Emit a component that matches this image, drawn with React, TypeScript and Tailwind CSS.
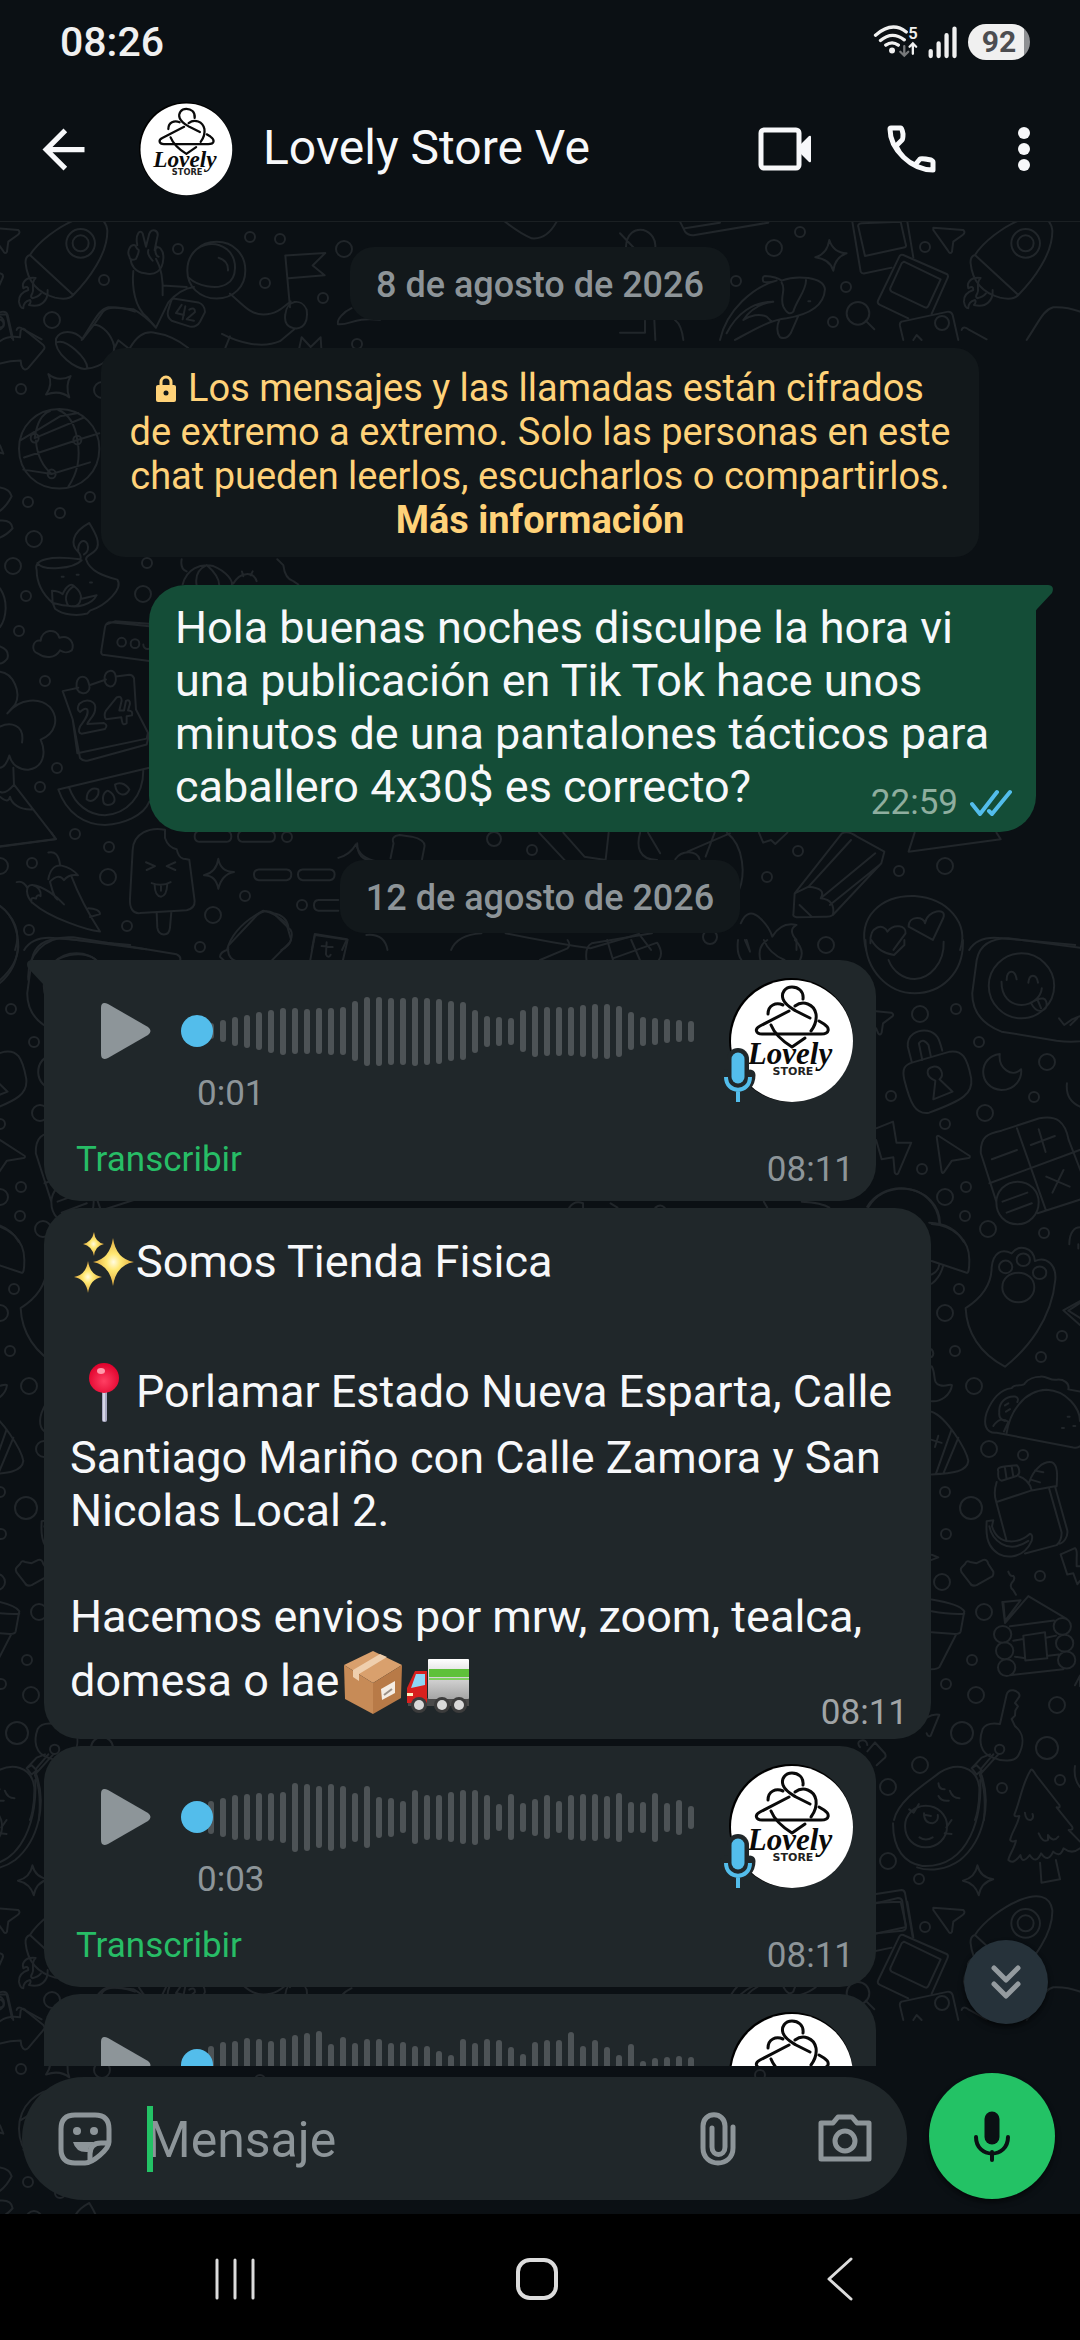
import React from "react";

const SANS = "Roboto, 'Noto Sans', sans-serif";

/* ---------- Wallpaper ---------- */

const DOTS: [number, number, number][] = [
  [104, 280, 5], [52, 320, 8], [178, 249, 5], [250, 237, 5], [280, 239, 5], [344, 249, 8], [265, 283, 5],
  [323, 298, 5], [21, 389, 5], [28, 502, 5], [60, 513, 5], [90, 497, 5], [34, 539, 8], [13, 566, 8],
  [147, 563, 5], [143, 594, 8], [26, 596, 5], [19, 631, 5], [45, 681, 5], [57, 768, 5], [40, 787, 5],
  [75, 834, 5], [109, 847, 5], [32, 863, 5], [108, 877, 8], [245, 896, 5], [213, 915, 8], [302, 905, 5],
  [127, 926, 5], [29, 930, 5], [200, 947, 5], [287, 837, 5], [357, 344, 5], [102, 390, 8], [798, 851, 5],
  [899, 871, 5], [945, 866, 8], [767, 877, 5], [826, 945, 8], [494, 839, 7], [532, 850, 5], [710, 937, 7],
  [920, 1014, 8], [956, 1009, 5], [979, 1042, 5], [1047, 1062, 8], [891, 1096, 5], [985, 1113, 8],
  [1034, 1097, 5], [945, 1124, 5], [922, 1169, 5], [945, 1197, 8], [966, 1187, 5], [965, 1216, 5],
  [988, 1229, 8], [1044, 1233, 5], [959, 1289, 5], [945, 1313, 8], [955, 1351, 5], [1062, 1336, 5],
  [1041, 1357, 5], [974, 1386, 8], [989, 1449, 8], [1023, 1455, 5], [945, 1492, 5], [971, 1508, 11],
  [946, 1534, 5], [942, 1582, 8], [1040, 1576, 5], [984, 1612, 8], [972, 1660, 5], [946, 1684, 5],
  [976, 1695, 8], [1057, 1705, 8], [962, 1733, 11], [1047, 1748, 11], [920, 1765, 8], [888, 1787, 8],
  [1002, 1788, 5], [1060, 1780, 5], [919, 1879, 5], [774, 248, 8], [800, 232, 5], [925, 247, 5],
  [846, 287, 5], [736, 281, 5], [833, 322, 5], [942, 323, 7], [888, 1861, 8],
  [260, 400, 5], [380, 420, 8], [520, 405, 5], [640, 410, 8], [760, 395, 5], [280, 545, 6], [560, 545, 7], [800, 548, 5],
];

const SCENE_TOP = [
  // astronaut, peace hand, suit badge, flag
  "M400 105C395 140 405 180 440 200L468 222L505 170C530 150 560 140 582 138M468 80C485 100 490 125 488 155M488 135L560 138",
  "M388 75C380 65 390 50 405 52L412 60C420 60 415 70 408 80C395 85 388 80 388 75M412 52C405 30 420 18 428 28L438 55L448 28C455 15 478 22 472 35L464 62M464 62C475 48 492 62 490 80C488 105 465 115 435 110C405 108 392 92 392 80M445 62C440 72 452 78 458 84M470 55C462 62 468 75 476 76",
  "M562 104C562 70 600 45 650 45C700 45 736 70 736 104C736 138 700 162 650 162C600 162 562 138 562 104ZM568 82C585 50 640 40 680 60C715 80 712 120 680 132C650 145 590 135 568 120M656 78C675 82 685 92 684 104",
  "M520 162L595 170Q615 175 615 190L600 210Q590 222 570 220L515 208Q500 200 504 188L512 170Q516 162 520 162ZM545 175L528 192L552 196M556 178L548 205M568 185Q585 178 585 190L560 205L582 208",
  "M690 152C730 175 750 195 790 195C830 195 850 180 872 168M666 235C720 255 790 265 840 250L882 226M870 180L856 73L976 68L938 94L974 114L866 120M856 195C860 165 905 160 920 185C925 210 912 222 890 224C862 222 852 212 856 195Z",
  "M282 216L310 188Q325 180 345 181L400 184Q440 200 468 222M248 246L282 216M248 246C220 225 180 228 168 245C160 275 230 310 258 307C300 305 360 280 338 250C325 228 300 216 282 216M172 252C200 245 260 285 262 305M345 262L355 248L388 266C410 240 430 230 460 232C500 236 540 250 565 264M676 264L690 240",
  "M898 264L905 242L932 262L962 242L964 264M1055 182C1030 190 1010 205 1014 215C1050 218 1060 200 1140 206",
  // arrow, star
  "M0 250C20 240 40 240 60 242L62 228Q70 220 80 230L130 258Q138 264 128 270L85 305Q72 314 64 300L62 290C40 290 20 292 0 296M0 195L20 195L36 244M0 205Q15 208 10 220L0 222",
  "M145 318Q175 335 212 322Q195 342 208 366Q180 350 138 360Q160 340 145 318Z",
  // globe
  "M57 472C57 425 110 390 178 390C245 390 298 425 298 472C298 520 245 554 178 554C110 554 57 520 57 472ZM60 455L180 405L235 398M104 450L250 408M108 455C110 485 130 510 155 524L270 500M155 524L70 515M72 490L232 454L298 440M232 454C225 420 205 400 175 392M104 450C110 420 125 400 150 394M232 454C242 490 235 520 205 550M92 450a12 9 0 1 0 24 0a12 9 0 1 0-24 0M220 454a12 9 0 1 0 24 0a12 9 0 1 0-24 0M143 524a12 9 0 1 0 24 0a12 9 0 1 0-24 0",
  // lamp
  "M110 722C100 700 150 692 240 700C245 698 240 688 235 685C210 670 215 645 268 625C280 640 305 665 288 680C275 692 258 690 258 700C270 725 310 735 352 742C370 760 320 795 270 806L262 812C230 818 190 815 165 802L158 790C125 770 110 745 110 722ZM112 708C130 725 220 720 245 702M235 685C232 665 250 655 262 668C268 680 262 686 252 690M158 790L156 765Q175 765 188 772C200 752 215 750 222 755C240 765 245 775 242 782L290 774C275 795 230 800 205 796C180 795 165 790 158 790M205 796C190 780 200 765 222 755M242 782C240 792 230 798 218 797M185 736h6M230 732h6M270 748h6",
  // cloud, radio
  "M115 895C90 890 98 865 122 868C125 845 170 840 178 862C210 855 225 875 215 888C200 895 190 892 180 888C165 905 135 905 115 895Z",
  "M448 910L308 897Q302 895 304 888L315 840Q318 830 332 830L448 838M320 834L345 828L448 833M352 871a13 9 0 1 0 26 0a13 9 0 1 0-26 0M392 874a13 9 0 1 0 26 0a13 9 0 1 0-26 0M430 876a13 9 0 1 0 26 0",
  // calendar
  "M235 965L188 972L218 1030L232 1100L440 1070L444 1058L408 1010L402 945Q398 938 388 938L348 942M268 960L318 948M218 1030L240 1110Q250 1118 265 1115L440 1082L448 1060M230 955C235 938 260 938 266 955C275 972 258 978 246 976C232 974 228 965 230 955ZM314 942C318 928 340 926 346 938C352 955 340 964 328 962C316 960 312 950 314 942Z",
  "M240 1015Q228 1010 238 998C260 985 292 992 285 1012C282 1025 265 1032 262 1040L312 1038Q325 1042 315 1050L245 1060Q232 1058 240 1045C250 1035 268 1022 262 1010Q255 1005 240 1015ZM350 985Q365 980 365 992L358 1012L372 1012L378 992Q390 988 390 998L384 1012Q400 1012 396 1022L380 1024L380 1038Q368 1044 366 1034L364 1026L318 1030Q310 1022 318 1012L350 985Z",
  // flower and basket
  "M0 932C40 935 65 975 45 1000L22 1018C60 985 120 985 150 1005C180 1030 165 1060 122 1072C140 1100 130 1130 85 1134C60 1135 35 1125 28 1105M0 1045C30 1035 75 1040 66 1078M28 1105C22 1120 10 1130 0 1130M40 1130L42 1165L168 1277L0 1292M42 1165C30 1175 15 1185 0 1180M0 1190Q25 1205 30 1190C35 1205 60 1218 100 1216",
  // watermelon
  "M175 1175L448 1130M175 1175C200 1225 255 1248 315 1248C370 1246 430 1230 448 1200M208 1172C225 1205 265 1228 315 1228C380 1225 430 1190 430 1135M260 1195C260 1175 280 1170 295 1175C300 1190 275 1205 260 1195ZM310 1200C305 1185 320 1175 325 1178C345 1185 350 1200 335 1205C325 1208 312 1208 310 1200ZM345 1165C355 1160 375 1160 388 1175C378 1190 350 1190 345 1165Z",
  // chillies
  "M145 1305Q175 1300 180 1330M145 1360C150 1340 165 1330 185 1332C205 1335 220 1340 234 1352C215 1350 200 1355 192 1362C180 1350 165 1355 150 1365C158 1385 160 1395 172 1402M215 1355C240 1400 265 1430 300 1468C260 1465 150 1440 100 1410C75 1395 75 1370 98 1372C130 1375 170 1395 192 1412M50 1366Q70 1362 82 1378M98 1372C115 1375 125 1385 122 1395Q110 1390 108 1400Q90 1395 95 1408M265 1420C285 1420 300 1425 300 1432L270 1438",
  // ice lolly
  "M495 1258C450 1252 400 1265 398 1300L390 1400C388 1420 400 1432 420 1430L560 1424Q585 1420 584 1405L568 1320Q555 1318 550 1318Q535 1315 530 1298Q505 1295 495 1275L495 1258M438 1325L465 1333L440 1341M526 1325L500 1333L526 1341M455 1368Q485 1376 512 1366M464 1372Q465 1395 483 1396Q500 1395 502 1370M483 1374L483 1384M470 1428L472 1460Q475 1474 492 1474Q508 1474 510 1460L514 1428",
  "M655 1318Q662 1345 702 1345Q665 1350 655 1380Q648 1352 612 1352Q650 1345 655 1318Z",
  "M598 1260H680Q694 1262 694 1272Q694 1282 680 1283H598Q584 1282 584 1272Q584 1262 598 1260ZM728 1260H810Q825 1262 825 1272Q825 1282 810 1283H728Q714 1282 714 1272Q714 1262 728 1260ZM776 1340H860Q874 1341 874 1350Q874 1361 860 1362H776Q762 1361 762 1350Q762 1341 776 1340ZM908 1340H990Q1004 1341 1004 1350Q1004 1361 990 1362H908Q894 1361 894 1350Q894 1341 908 1340ZM1015 1403H955Q942 1404 942 1414Q942 1424 955 1425H1015M1015 1316Q1050 1310 1068 1288Q1080 1318 1130 1323",
  // card and chat
  "M685 1500C680 1520 700 1530 720 1530M688 1495L770 1435Q795 1420 820 1430L872 1465Q880 1475 870 1490L815 1528M820 1430Q860 1435 865 1458M685 1505Q660 1510 660 1520L675 1530M930 1530L945 1475L1043 1485L1028 1530M980 1490L978 1515Q985 1525 992 1516M965 1498L998 1500",
  "M85 1568C80 1520 130 1475 220 1480L530 1515Q545 1520 540 1528M130 1560C160 1510 260 1505 290 1528M0 1415C40 1435 55 1470 55 1500C52 1530 30 1550 0 1568",
  "M0 552Q30 555 35 570Q20 590 0 600M0 620Q35 618 38 636Q20 650 0 655M0 760C25 785 20 820 0 840M0 880Q30 888 22 905Q10 915 0 915M0 480L10 482L0 465",
  "M548 752C560 720 600 708 640 714C680 725 700 745 695 754M590 754C585 735 595 720 620 712C650 730 658 745 658 754M545 700Q540 720 560 725M832 700L850 712Q855 740 880 745L895 752M700 750C720 725 760 725 770 745M730 735l-4-10M752 733l6-8",
];

const SCENE_TOP_RIGHT = [
  "M1065 765L1195 885Q1180 902 1140 893Q1060 870 1052 790Q1050 770 1065 765ZM1065 765C1090 725 1150 680 1200 660C1250 640 1290 645 1297 690C1300 760 1240 840 1195 885M1174 730a43 43 0 1 0 86 0a43 43 0 1 0-86 0M1193 730a24 24 0 1 0 48 0a24 24 0 1 0-48 0",
  "M1082 834C1050 830 1040 850 1045 865Q1060 855 1060 870Q1030 880 1032 905Q1035 925 1045 925Q1045 905 1065 900Q1070 905 1062 915C1100 925 1120 900 1118 870M1082 834C1065 850 1080 865 1072 880Q1065 890 1072 895Q1090 890 1098 880",
  "M940 683L1030 690Q1038 698 1028 705L1000 725L996 755Q990 765 984 752L940 690Z",
  "M697 665L722 815Q725 822 735 820L815 803M715 680L735 768L855 742Q860 740 857 732L842 665M715 680Q712 672 725 670L842 665M862 665L880 772",
  "M850 765L980 822Q987 826 982 836L935 942M850 765Q842 762 838 770L775 900Q770 910 780 915L865 955M852 785L962 838L925 918Q922 925 915 922L815 875Q808 870 812 862L845 790Z",
  "M845 965L985 935Q995 935 998 945L1015 1020M845 965Q838 968 840 978L850 1020M880 1020L890 1005L905 1020",
  "M628 720Q640 758 680 760Q645 772 640 812Q630 778 586 772Q622 762 628 720Z",
  "M680 940a34 34 0 1 0 68 0a34 34 0 1 0-68 0M737 962L763 988",
  "M300 1020C320 930 400 860 470 842Q440 850 430 845Q425 830 435 828Q470 830 485 842C530 825 610 830 615 868C612 920 560 945 500 955C450 960 400 990 345 1020M485 848C500 870 478 890 490 920Q505 950 520 935C530 900 560 870 558 840M320 1000C350 940 400 905 460 905C420 910 390 930 370 960C390 945 420 940 440 950L455 965M478 960Q465 990 480 1012Q500 1020 512 1000L535 948M565 904h6",
  "M180 665L195 695Q205 708 225 705L445 668M195 685L300 668M18 740C20 700 45 685 70 690C95 698 108 720 106 742M0 700L40 742M0 998H75V962M103 960L106 1020M165 960Q185 975 190 1020",
  "M-345 665Q-300 700 -265 715Q-220 720 -190 665M30 665",
  "M1025 990Q1030 975 1048 990L1100 1018M1220 1020C1260 960 1270 930 1300 922Q1340 920 1380 935",
];

const SCENE_UPPER_MIDDLE = [
  "M1097 970L1175 790Q1185 780 1200 800L1245 845L1240 880L1160 1035Q1155 1042 1145 1040L1100 1042Q1093 1040 1095 1030ZM1097 970L1120 950Q1150 955 1140 985Q1165 990 1160 1035M1120 950L1190 810M1140 985L1230 850M1155 1005L1237 885M1105 1005L1125 1040",
  "M1295 788L1285 845L1437 808L1430 788M1215 1140C1200 1040 1240 975 1295 978C1350 985 1385 1060 1370 1140M1285 1070C1285 1035 1312 1040 1312 1060C1315 1020 1350 1010 1342 1045L1325 1110ZM1222 1120C1220 1065 1245 1060 1250 1085C1260 1060 1282 1065 1280 1090L1260 1140",
  "M1008 1060Q1020 1010 1040 1045Q1055 1070 1060 1100Q1075 1055 1100 1065Q1085 1080 1100 1110L1100 1140M1385 1140Q1400 1095 1440 1105L1560 1125",
  "M675 788L735 905M715 788L750 860L785 870L790 788M842 788C835 830 840 870 870 870M855 788L875 850M985 788C1015 830 1015 920 1005 960M900 868C910 840 935 840 940 868M920 845L990 790M965 788L950 860",
  "M375 820Q375 870 400 872M430 865L435 820Q430 798 445 795L465 800Q488 810 486 830L482 868M1038 788L1045 818L1058 810L1065 822L1085 788",
  "M390 1095Q420 1090 425 1140M530 1140Q540 1095 580 1090M620 1090Q700 1120 760 1135L840 1092L860 1140M300 1140L305 1092L358 1108L350 1140M160 1140Q170 1070 220 1022Q240 1030 258 1060L266 1110Q262 1130 250 1140",
];

const SCENE_MIDDLE = [
  "M945 0C945 90 1010 160 1088 160C1165 160 1228 100 1228 10V0M1012 60C1025 95 1055 117 1088 117C1130 117 1175 70 1172 5M962 0C980 30 1000 40 1028 45L1058 15V0",
  "M1255 160L1268 60Q1280 -5 1360 -5L1600 28M1255 160C1255 220 1290 255 1340 275L1500 302Q1570 312 1620 290M1303 137C1303 85 1345 40 1398 40C1450 40 1493 85 1493 137C1493 190 1450 235 1398 235C1345 235 1303 190 1303 137ZM1340 125C1340 170 1365 195 1398 195C1430 195 1455 170 1457 145M1355 120C1355 90 1380 85 1384 118M1418 128C1420 100 1442 100 1446 128M1425 188L1445 178Q1465 170 1470 185Q1475 205 1458 212Q1440 218 1425 188M1445 180L1455 205M1507 235L1522 255L1545 238L1600 215M1540 255L1560 235",
  "M976 214L1020 218Q1030 224 1022 230L996 250L992 278Q988 288 982 280L976 265",
  "M1080 368L1068 320C1065 285 1095 268 1125 272C1155 278 1160 300 1168 332M1135 350L1128 315Q1112 292 1100 310L1110 360M1080 368L1190 335C1225 330 1240 350 1252 415C1258 460 1230 480 1130 518C1090 525 1075 490 1058 420C1050 385 1060 375 1080 368ZM1142 478L1148 422C1120 410 1118 385 1142 380C1165 378 1175 405 1160 418L1198 455Z",
  "M1335 342C1270 350 1270 445 1340 450C1380 450 1400 415 1397 388C1370 415 1330 385 1335 342Z",
  "M976 565L1025 545L1035 608L1078 608L1040 700Q1035 706 1030 698L1026 652L992 658L976 600",
  "M1158 588L1248 648Q1250 655 1240 655L1196 662L1172 698Q1168 702 1166 694L1152 592Q1152 586 1158 588Z",
  "M1280 640C1278 590 1300 580 1340 572L1450 535C1500 525 1525 545 1535 600L1580 720M1280 640L1325 785M1445 820L1580 775M1385 565L1468 808M1305 730L1580 625M1312 658L1385 630M1448 568L1468 636M1425 615L1495 588M1520 690L1488 758M1470 710L1538 740M1325 787C1325 755 1350 725 1387 725C1425 725 1448 755 1448 787C1448 825 1420 853 1387 853C1350 853 1325 825 1325 787ZM1343 785L1415 758M1355 818L1428 790",
  "M950 800C970 765 1010 745 1048 745C1110 745 1155 790 1160 850M1130 848Q1200 850 1230 905",
  "M1530 430Q1525 480 1568 500L1590 505",
  "M85 803Q100 780 125 790V803M335 803Q350 790 362 803M650 785L660 803M760 785Q820 788 840 803M205 790L225 803M575 0Q570 40 585 60M595 0L610 35L600 0M640 60Q630 20 660 0M650 0Q665 40 710 60M740 0Q770 30 755 60M195 0L212 60M265 0L290 60M212 55L340 8Q360 40 345 60M135 60Q130 20 150 10L325 -20M0 60L80 25Q90 15 80 0",
];

const SCENE_LOWER = [
  "M265 112C290 80 330 68 372 68C440 72 480 110 480 152M455 152C520 155 570 190 568 240Q568 270 560 268L455 240M490 250Q480 280 455 294M455 272Q475 265 478 248",
  "M557 352C600 330 635 300 635 255C640 220 665 210 695 222C715 200 760 205 765 240C800 228 830 250 826 285C815 380 740 450 675 491C600 460 560 410 557 352ZM657 254a20 15 0 1 0 40 0a20 15 0 1 0-40 0M710 237a20 15 0 1 0 40 0a20 15 0 1 0-40 0M759 268a20 15 0 1 0 40 0a20 15 0 1 0-40 0M667 303C667 280 690 268 715 268C742 268 763 282 763 303C763 322 742 338 715 338C690 338 667 322 667 303Z",
  "M900 335L850 357L900 392M900 340L865 358L900 375M868 200C868 170 885 160 900 160M895 200V210",
  "M455 490C470 510 455 530 480 535C500 540 510 530 516 535C512 560 480 575 455 573M455 598C500 610 560 690 565 715C562 740 520 745 455 747M455 665L485 672M475 655L465 682M515 640L468 745M535 660L490 745",
  "M650 648C615 650 610 625 620 600C640 560 665 545 695 542C705 530 730 540 735 530C745 520 765 515 780 515C800 512 810 525 830 522C850 520 870 530 865 545L900 550M650 648L880 683Q895 685 900 680M680 648C690 600 730 548 800 546C860 548 900 590 900 620M658 600C655 575 680 560 705 562Q718 565 712 575M658 600Q655 615 675 620M675 583L685 578M678 598L690 592M640 632Q660 608 685 622L672 645M863 610h6M846 637h6M880 632h6",
  "M655 740C650 730 660 728 710 725Q718 730 718 742Q716 750 705 752L665 762Q652 760 655 740ZM675 732L680 758M695 728L700 752M650 765Q640 790 648 810L680 905M652 812L755 785L825 775M755 785C750 765 730 755 718 752M748 765C760 735 790 715 815 718C835 725 832 750 830 775M765 738L790 742M755 760L780 766M825 775L862 880C865 895 850 912 835 912M808 782L845 885Q845 905 830 915L735 935M620 858L640 856L636 870C655 920 720 910 750 888Q760 890 755 905C730 950 660 955 630 915C615 895 620 870 620 858ZM628 870C635 900 680 940 745 905",
  "M545 968L555 960Q560 950 570 955L590 958L610 950Q622 948 625 960L640 978Q642 990 630 992L590 1010Q575 1014 570 1005L545 980Q540 972 545 968ZM842 937L885 922Q892 925 890 945L890 965L900 965M842 937L862 985L880 982L892 1008L900 1000",
  "M685 978Q690 990 700 988Q708 995 695 1005Q688 1015 700 1022L708 1033M670 1050L722 1046L675 1095ZM667 1050L675 1100M675 1100L745 1036L860 1090M690 1108L822 1094M700 1142L730 1138M705 1180L735 1184M690 1224L850 1210M798 1135L828 1130M805 1178L836 1175M730 1130L795 1122L802 1184L736 1189ZM642 1127a26 20 0 1 0 52 0a26 20 0 1 0-52 0M648 1166a26 20 0 1 0 52 0a26 20 0 1 0-52 0M654 1206a26 20 0 1 0 52 0a26 20 0 1 0-52 0M821 1108a26 20 0 1 0 52 0a26 20 0 1 0-52 0M828 1148a26 20 0 1 0 52 0a26 20 0 1 0-52 0M834 1188a26 20 0 1 0 52 0a26 20 0 1 0-52 0",
  "M455 1044Q540 1055 553 1072L542 1120Q540 1126 525 1126L455 1122M553 1078Q510 1080 455 1072M528 1128L478 1205Q472 1210 455 1210M440 1325Q460 1315 478 1318L452 1368Q445 1372 440 1362",
  "M660 1340L680 1270Q685 1258 700 1260Q722 1265 718 1275L705 1290L714 1298L706 1308L705 1320L695 1328L705 1345C730 1360 735 1385 715 1415C705 1430 665 1430 640 1420C600 1410 595 1380 608 1352Q620 1335 660 1340ZM645 1400a14 11 0 1 0 28 0a14 11 0 1 0-28 0M640 1412L605 1445M655 1412L600 1460M575 1445L590 1438L605 1450L590 1460ZM575 1445L605 1420L630 1412",
  "M342 1568C355 1520 440 1480 480 1455C530 1430 590 1440 598 1490C600 1540 585 1568 585 1568M600 1462Q620 1500 612 1568",
  "M885 1440Q880 1470 900 1490M455 450Q465 460 455 468M455 938L475 944L455 950M885 1248L900 1225V1250",
  "M240 1395Q230 1385 240 1380Q260 1375 262 1390M285 1384L315 1410Q320 1418 312 1422L290 1438M262 1405L285 1384",
];

const SCENE_LOWEST = [
  "M1110 378C1060 370 1025 330 1025 250M1278 120C1285 220 1250 385 1110 378M1282 105C1310 190 1290 300 1220 360C1180 390 1130 395 1095 382M1060 258C1060 225 1085 197 1120 197C1155 197 1182 225 1182 258C1182 295 1155 322 1120 322C1085 322 1060 295 1060 258ZM1072 208L1085 218L1100 192M1115 220Q1115 250 1140 250Q1158 245 1155 225M1120 225L1135 228M1102 292Q1120 305 1140 292M1180 262L1195 240M1175 280L1195 282",
  "M1157 130Q1158 148 1175 148M1157 168Q1165 185 1187 182M1190 152Q1198 175 1218 175",
  "M1425 90C1400 130 1395 180 1378 222Q1375 232 1392 228C1385 260 1370 275 1365 300Q1370 308 1382 302C1378 325 1362 345 1360 360Q1375 375 1395 345Q1400 375 1422 345Q1440 375 1455 340Q1475 370 1490 335Q1510 355 1520 325Q1545 345 1568 325M1425 90Q1430 85 1440 105L1508 195Q1512 205 1500 202L1545 260Q1550 270 1535 270L1568 305M1408 218Q1410 242 1425 240Q1435 235 1430 222M1448 280Q1460 310 1475 300L1475 285Q1490 310 1505 290M1452 368L1456 428L1510 418L1498 360",
  "M1270 376Q1278 412 1316 418Q1280 428 1274 466Q1264 430 1228 422Q1264 412 1270 376Z",
  "M976 462L1050 450Q1058 450 1060 460L1082 590M976 490L1040 474Q1050 474 1052 484L1062 562Q1064 570 1052 572L976 580",
];

function Scene({ paths, transform }: { paths: string[]; transform: string }) {
  return (
    <g transform={transform}>
      {paths.map((d, i) => (
        <path key={i} d={d} vectorEffect="non-scaling-stroke" />
      ))}
    </g>
  );
}

function Wallpaper() {
  return (
    <svg aria-hidden="true" className="pointer-events-none absolute top-0 left-0 h-full w-full" fill="none">
      <defs>
        <g id="doodles">
          {DOTS.map(([x, y, r], i) => (
            <circle key={i} cx={x} cy={y} r={r} />
          ))}
          <Scene paths={SCENE_TOP} transform="translate(0 220) scale(.3333 .4847)" />
          <Scene paths={SCENE_TOP_RIGHT} transform="translate(620 0) scale(.3333)" />
          <Scene paths={SCENE_UPPER_MIDDLE} transform="translate(130 570) scale(.6059 .3333)" />
          <Scene paths={SCENE_MIDDLE} transform="translate(540 940) scale(.3444 .3333)" />
          <Scene paths={SCENE_LOWER} transform="translate(780 1160) scale(.3333 .4209)" />
          <Scene paths={SCENE_LOWEST} transform="translate(540 1740) scale(.3444 .3333)" />
        </g>
      </defs>
      <g stroke="#21262a" strokeWidth="2" strokeLinecap="round" strokeLinejoin="round" transform="translate(0 -222)">
        <use href="#doodles" x="-945" />
        <use href="#doodles" />
        <use href="#doodles" x="-945" y="1680" />
        <use href="#doodles" y="1680" />
      </g>
    </svg>
  );
}

/* ---------- Shared drawings ---------- */

function StoreLogo({ className }: { className: string }) {
  return (
    <svg viewBox="0 0 125 125" className={className} role="img" aria-label="Lovely Store">
      <circle cx="62" cy="62" r="62" fill="#000" />
      <circle cx="63" cy="63" r="61" fill="#fff" />
      <g fill="none" stroke="#0a0a0a" strokeWidth="3" strokeLinecap="round" strokeLinejoin="round">
        <path d="M74 21C75 13 69 9 63 9C56 9 52 15 54 21C56 27 62 30 67 33L81 40" />
        <path d="M60 33L31 48C25 51 27 56 33 56H92C101 56 101 50 95 46L90 43" />
        <path d="M39 36C39 27 47 24 54 27" />
        <path d="M66 28C74 22 85 26 87 36C88 43 85 49 82 53" />
        <path d="M42 47C46 57 55 64 63 69L76 60" />
      </g>
      <text x="61" y="86" textAnchor="middle" fontSize="31" fontWeight="700" fontStyle="italic" fontFamily="'Liberation Serif', serif" fill="#0a0a0a">
        Lovely
      </text>
      <text x="64" y="97" textAnchor="middle" fontSize="11" fontWeight="700" fontFamily="'DejaVu Sans', sans-serif" fill="#222">
        STORE
      </text>
    </svg>
  );
}

function Tail({ className }: { className: string }) {
  return (
    <svg aria-hidden="true" viewBox="0 0 20 30" className={className}>
      <path d="M0 0H14C19 0 20 4 18 8L3 24Q0 28 0 30Z" fill="currentColor" />
    </svg>
  );
}

const EMOJI = "inline-block h-[77px] w-[66px] align-[-24px]";

function Sparkles() {
  return (
    <svg role="img" aria-label="✨" viewBox="0 0 66 77" className={EMOJI}>
      <defs>
        <radialGradient id="spark">
          <stop offset="0" stopColor="#fffbe0" />
          <stop offset=".35" stopColor="#ffe873" />
          <stop offset="1" stopColor="#e0a83a" />
        </radialGradient>
      </defs>
      <g fill="url(#spark)">
        <path d="M43 14Q46 35 64 38Q46 41 43 62Q40 41 23 38Q40 35 43 14Z" />
        <path d="M24 8Q25 18 34 20Q25 22 24 32Q22 22 13 20Q22 18 24 8Z" />
        <path d="M18 37Q20 51 32 53Q20 55 18 69Q16 55 4 53Q16 51 18 37Z" />
      </g>
    </svg>
  );
}

function Pin() {
  return (
    <svg role="img" aria-label="📍" viewBox="0 0 66 77" className={EMOJI}>
      <defs>
        <radialGradient id="pin" cx=".5" cy=".6" r=".6">
          <stop offset="0" stopColor="#ff3f63" />
          <stop offset="1" stopColor="#e0002b" />
        </radialGradient>
      </defs>
      <rect x="32" y="36" width="5" height="32" rx="2" fill="#a9a9c2" />
      <rect x="33" y="36" width="2" height="31" fill="#d6d6e6" />
      <circle cx="34" cy="24" r="15" fill="url(#pin)" />
      <ellipse cx="31" cy="17" rx="4" ry="3" fill="#ff9aab" />
    </svg>
  );
}

function Parcel() {
  return (
    <svg role="img" aria-label="📦" viewBox="0 0 66 77" className={EMOJI}>
      <path d="M34 8L63 22L34 40L5 22Z" fill="#d9a06d" />
      <path d="M5 22L34 40V71L6 56Z" fill="#c78b57" />
      <path d="M63 22L34 40V71L62 55Z" fill="#b87a47" />
      <path d="M41 11L48 14L20 31V38L14 34V27Z" fill="#efcfae" />
      <path d="M42 46L56 38V50L43 57Z" fill="#f4ece4" />
      <path d="M45 52L53 46" stroke="#9a8f86" strokeWidth="2" />
    </svg>
  );
}

function Lorry() {
  return (
    <svg role="img" aria-label="🚛" viewBox="0 0 66 77" className={EMOJI}>
      <defs>
        <linearGradient id="trailer" x1="0" y1="0" x2="0" y2="1">
          <stop offset="0" stopColor="#fff" />
          <stop offset="1" stopColor="#a5a5a5" />
        </linearGradient>
      </defs>
      <rect x="3" y="55" width="61" height="8" fill="#4a4a4a" />
      <rect x="23" y="16" width="41" height="40" rx="1" fill="url(#trailer)" />
      <rect x="24" y="26" width="40" height="8" fill="#5fc13a" />
      <rect x="24" y="35" width="40" height="2" fill="#7fd05f" />
      <path d="M10 28H22V60H2V45Z" fill="#d8201e" />
      <path d="M11 31H20V42L6 45Z" fill="#8fd7f5" />
      <path d="M2 50H8V53H2Z" fill="#fff2c0" />
      {[14, 37, 54].map((x) => (
        <g key={x}>
          <circle cx={x} cy="62" r="8" fill="#3c3c3c" />
          <circle cx={x} cy="62" r="5" fill="#d9d9d9" />
        </g>
      ))}
    </svg>
  );
}

/* ---------- Header ---------- */

function StatusBar() {
  return (
    <div className="flex h-[82px] items-center justify-between pt-[2px] pr-[50px] pl-[60px]">
      <span className="text-[41px] leading-[48px] font-medium text-[#f0f0f0]">08:26</span>
      <div className="flex items-center gap-2">
        <svg viewBox="755 65 265 115" className="h-[38px] w-[88px]" fill="none" strokeLinecap="round" aria-label="Wi-Fi y señal" role="img">
          <g stroke="#f0f0f0" strokeWidth="10">
            <path d="M765 102Q815 58 858 92M780 118Q815 88 852 116M796 132Q815 118 834 132" />
            <path d="M878 158V132M868 137L878 127L888 137" strokeWidth="7" />
            <path d="M932 150V165M956 127V165M980 102V165M1004 82V165" strokeWidth="13" />
          </g>
          <circle cx="815" cy="148" r="9" fill="#f0f0f0" />
          <path d="M852 135V160M840 152L852 164L864 152" stroke="#77797b" strokeWidth="7" />
          <text x="864" y="112" fontSize="50" fontWeight="600" fontFamily={SANS} fill="#f0f0f0">5</text>
        </svg>
        <div className="flex h-9 w-[62px] overflow-hidden rounded-full bg-gradient-to-r from-[#f0f0f0] from-90% to-[#8e9093] to-90%">
          <span className="w-full text-center text-[30px] leading-9 font-bold text-[#4c4d50]">92</span>
        </div>
      </div>
    </div>
  );
}

function Header() {
  return (
    <header className="shrink-0 border-b border-[#1b2023] bg-[#0b1014]">
      <StatusBar />
      <div className="flex h-[139px] items-center pr-[26px] pb-[5px] pl-8">
        <button aria-label="Atrás" className="shrink-0">
          <svg viewBox="0 0 24 24" className="size-[63px]" fill="#f7f8fa">
            <path d="M7.8 13l5.6 5.6L12 20l-8-8 8-8 1.4 1.4L7.8 11H20v2z" />
          </svg>
        </button>
        <StoreLogo className="ml-11 size-[94px] shrink-0" />
        <h1 className="ml-[30px] flex-1 truncate pb-[2px] text-[48px] leading-[60px] text-[#f7f8fa]">Lovely Store Ve</h1>
        <div className="flex shrink-0 items-center">
          <button aria-label="Videollamada" className="mr-[66px]">
            <svg viewBox="0 0 60 60" className="size-[60px]">
              <rect x="6" y="11" width="38" height="38" rx="3" fill="none" stroke="#f7f8fa" strokeWidth="5" />
              <path d="M45 26L54 17Q56 16 56 18V42Q56 44 54 43L45 34Z" fill="#f7f8fa" />
            </svg>
          </button>
          <button aria-label="Llamar" className="mr-[53px]">
            <svg viewBox="0 0 60 60" className="size-[60px]" fill="none" stroke="#f7f8fa" strokeWidth="5" strokeLinejoin="round">
              <path d="M10 9H20Q21 9 22 15Q22 20 21 21L15 27C19 36 25 42 34 46L39 40Q40 39 50 41Q52 42 52 43V51C30 51 9 30 9 10Q9 9 10 9Z" />
            </svg>
          </button>
          <button aria-label="Más opciones">
            <svg viewBox="0 0 60 60" className="size-[60px]" fill="#f7f8fa">
              <circle cx="30" cy="14" r="6" />
              <circle cx="30" cy="30" r="6" />
              <circle cx="30" cy="46" r="6" />
            </svg>
          </button>
        </div>
      </div>
    </header>
  );
}

/* ---------- Messages ---------- */

function DatePill({ children }: { children: React.ReactNode }) {
  return (
    <div className="self-center rounded-3xl bg-[#12181b] px-[26px] pt-[18px] pb-[14px] text-[36px] leading-[41px] font-medium text-[#8d9498]">
      {children}
    </div>
  );
}

function PlayIcon() {
  return (
    <svg viewBox="0 0 50 56" className="h-14 w-[50px]" fill="#8d9599">
      <path d="M0 5Q0-2 7 1L47 24Q52 28 47 32L7 55Q0 58 0 51Z" />
    </svg>
  );
}

function BadgeMic() {
  return (
    <svg aria-hidden="true" viewBox="0 0 46 64" className="absolute -bottom-1 -left-[14px] h-16 w-[46px]">
      <g fill="none" stroke="#20272a" strokeLinecap="round">
        <path d="M23 16V34" strokeWidth="22" />
        <path d="M11 32C11 50 35 50 35 32M23 46V54" strokeWidth="11" />
      </g>
      <path d="M23 16V34" stroke="#53bdeb" strokeWidth="13" strokeLinecap="round" />
      <path d="M11 34C11 51 35 51 35 34M23 46V59" fill="none" stroke="#53bdeb" strokeWidth="4" />
    </svg>
  );
}

function VoiceMessage({ bars, length, time, tail }: { bars: number[]; length: string; time: string; tail?: boolean }) {
  return (
    <article
      className={`relative w-[832px] max-w-full shrink-0 bg-[#20272a] pt-[18px] pr-[22px] pb-[11px] pl-8 text-[35px] leading-10 text-[#8d9599] ${
        tail ? "rounded-[36px] rounded-tl-none" : "rounded-[36px]"
      }`}
    >
      {tail && <Tail className="absolute top-0 -left-[18px] h-[30px] w-5 -scale-x-100 text-[#20272a]" />}
      <div className="flex">
        <button aria-label="Reproducir" className="mt-[11px] ml-[25px] flex h-[84px] items-center">
          <PlayIcon />
        </button>
        <div className="ml-[30px] pt-[11px]">
          <div className="relative flex h-[84px] items-center gap-[6px] pl-[27px]">
            {bars.map((h, i) => (
              <span key={i} className="w-[6px] rounded-full bg-[#4d5356]" style={{ height: h }} />
            ))}
            <span className="absolute left-0 size-8 rounded-full bg-[#53bdeb]" />
          </div>
          <div className="mt-px pl-4">{length}</div>
        </div>
        <div className="relative ml-auto size-[125px]">
          <StoreLogo className="size-[125px]" />
          <BadgeMic />
        </div>
      </div>
      <div className="mt-[26px] flex items-end justify-between">
        <button className="pb-[10px] text-[#27bd66]">Transcribir</button>
        <time>{time}</time>
      </div>
    </article>
  );
}

const VOICE_1 = [16, 22, 29, 33, 38, 43, 47, 46, 45, 46, 47, 48, 60, 69, 69, 67, 67, 69, 67, 65, 60, 58, 43, 31, 29, 27, 42, 51, 49, 49, 49, 52, 55, 55, 51, 38, 29, 27, 24, 22, 21];
const VOICE_2 = [33, 39, 45, 46, 48, 48, 51, 69, 67, 62, 67, 63, 49, 62, 41, 39, 32, 54, 45, 45, 50, 54, 55, 45, 27, 46, 29, 37, 44, 32, 45, 47, 47, 43, 49, 31, 31, 49, 29, 35, 23];
const VOICE_3 = [39, 46, 49, 54, 52, 48, 54, 61, 64, 69, 42, 56, 45, 52, 52, 44, 46, 38, 38, 29, 21, 52, 45, 53, 51, 36, 23, 46, 51, 51, 67, 39, 50, 36, 20, 43, 9, 14, 16, 18, 16];

function Conversation() {
  return (
    <div className="relative flex min-h-0 flex-1 flex-col overflow-hidden px-[44px] pt-[25px]">
      <div className="flex shrink-0 flex-col gap-7">
        <DatePill>8 de agosto de 2026</DatePill>
        <div className="max-w-[878px] self-center rounded-3xl bg-[#12181b] px-6 pt-[18px] pb-[15px] text-center text-[38px] leading-[44px] text-[#ffd279]">
          <svg aria-hidden="true" viewBox="0 0 20 28" className="mr-3 inline-block h-7 w-5 align-[-2px]">
            <path d="M5 12V7a5 5 0 0 1 10 0V12" fill="none" stroke="#ffd279" strokeWidth="3" />
            <rect y="10" width="20" height="17" rx="2" fill="#ffd279" />
            <circle cx="10" cy="18" r="2.5" fill="#12181b" />
          </svg>
          Los mensajes y las llamadas están cifrados <br />
          de extremo a extremo. Solo las personas en este chat pueden leerlos, escucharlos o compartirlos. <br />
          <button className="font-bold">Más información</button>
        </div>
        <article className="relative max-w-[887px] self-end rounded-[36px] rounded-tr-none bg-[#144d37] pt-4 pr-[23px] pb-[9px] pl-[26px] text-[45px] leading-[53px] text-[#f7f8fa]">
          <Tail className="absolute top-0 -right-[18px] h-[30px] w-5 text-[#144d37]" />
          <p>Hola buenas noches disculpe la hora vi una publicación en Tik Tok hace unos minutos de una pantalones tácticos para caballero 4x30$ es correcto?</p>
          <div className="-mt-[30px] flex items-center justify-end gap-3 text-[35px] leading-10 text-[#8fae9f]">
            <time>22:59</time>
            <svg role="img" aria-label="Leído" viewBox="0 0 43 28" className="h-7 w-[43px]" fill="none" stroke="#53bdeb" strokeWidth="4" strokeLinecap="round" strokeLinejoin="round">
              <path d="M2 15L10 25L27 3M19 22L22 25L40 3" />
            </svg>
          </div>
        </article>
        <DatePill>12 de agosto de 2026</DatePill>
      </div>
      <div className="mt-[27px] flex shrink-0 flex-col items-start gap-[7px]">
        <VoiceMessage bars={VOICE_1} length="0:01" time="08:11" tail />
        <article className="max-w-[887px] rounded-[36px] bg-[#20272a] pt-4 pr-[23px] pb-[6px] pl-[26px] text-[45px] leading-[53px] text-[#f7f8fa]">
          <p><Sparkles />Somos Tienda Fisica</p>
          <p className="mt-[53px]"><Pin />Porlamar Estado Nueva Esparta, Calle Santiago Mariño con Calle Zamora y San Nicolas Local 2.</p>
          <p className="mt-[53px]">Hacemos envios por mrw, zoom, tealca, domesa o lae<Parcel /><Lorry /></p>
          <div className="-mt-[27px] text-right text-[35px] leading-10 text-[#a0a4a6]">
            <time>08:11</time>
          </div>
        </article>
        <VoiceMessage bars={VOICE_2} length="0:03" time="08:11" />
        <VoiceMessage bars={VOICE_3} length="0:02" time="08:11" />
      </div>
    </div>
  );
}

/* ---------- Composer ---------- */

function Composer() {
  return (
    <form className="relative flex shrink-0 items-start gap-[22px] pt-[7px] pr-[25px] pb-[14px] pl-[22px]" onSubmit={(e) => e.preventDefault()}>
      <div className="mt-1 flex h-[123px] min-w-0 flex-1 items-center rounded-full bg-[#20272a] pr-[32px] pl-[33px]">
        <button type="button" aria-label="Stickers" className="shrink-0">
          <svg viewBox="0 0 60 60" className="size-[60px]" fill="none" stroke="#8d9599" strokeWidth="5">
            <path d="M20 6H40Q54 6 54 20V33C54 40 38 54 30 54H20Q6 54 6 40V20Q6 6 20 6Z" strokeLinejoin="round" />
            <path d="M35 54V45Q35 34 46 34H54" />
            <circle cx="22" cy="22" r="4" fill="#8d9599" stroke="none" />
            <circle cx="39" cy="22" r="4" fill="#8d9599" stroke="none" />
            <path d="M18 33H39Q33 37 33 43Q21 44 18 33Z" fill="#8d9599" stroke="none" />
          </svg>
        </button>
        <div className="relative ml-8 flex min-w-0 flex-1 items-center">
          <span className="absolute left-0 h-[66px] w-[6px] bg-[#23c265]" />
          <input aria-label="Mensaje" placeholder="Mensaje" className="h-[70px] w-full bg-transparent pt-1 text-[50px] text-[#f7f8fa] outline-none placeholder:text-[#8d9599]" />
        </div>
        <button type="button" aria-label="Adjuntar" className="mr-[67px] shrink-0">
          <svg viewBox="0 0 60 60" className="size-[60px]" fill="none" stroke="#8d9599" strokeWidth="5" strokeLinecap="round">
            <path d="M45 18V39C45 59 15 59 15 39V17C15 2 37 2 37 17V38C37 48 24 48 24 38V19" />
          </svg>
        </button>
        <button type="button" aria-label="Cámara" className="shrink-0">
          <svg viewBox="0 0 60 60" className="size-[60px]" fill="none" stroke="#8d9599" strokeWidth="5" strokeLinejoin="round">
            <path d="M6 14H18L23 8H37L42 14H54V50H6Z" />
            <circle cx="30" cy="32" r="10" />
          </svg>
        </button>
      </div>
      <button type="button" aria-label="Mensaje de voz" className="flex size-[126px] shrink-0 items-center justify-center rounded-full bg-[#23c265] shadow-md shadow-black/50">
        <svg viewBox="0 0 40 52" className="h-[52px] w-10" fill="none" stroke="#0b1014" strokeLinecap="round">
          <path d="M20 9V27" strokeWidth="15" />
          <path d="M4 27C4 49 36 49 36 27M20 42V50" strokeWidth="4" />
        </svg>
      </button>
    </form>
  );
}

function NavigationBar() {
  return (
    <nav className="grid h-[126px] shrink-0 grid-cols-3 place-items-center bg-black pt-1 pr-[90px] pl-[84px]">
      <button aria-label="Recientes">
        <svg viewBox="0 0 44 44" className="size-11" stroke="#dcdcdc" strokeWidth="3" strokeLinecap="round">
          <path d="M4 3V41M22 3V41M40 3V41" />
        </svg>
      </button>
      <button aria-label="Inicio">
        <svg viewBox="0 0 44 44" className="size-11" fill="none" stroke="#dcdcdc" strokeWidth="4">
          <rect x="3" y="3" width="38" height="38" rx="12" />
        </svg>
      </button>
      <button aria-label="Volver">
        <svg viewBox="0 0 44 44" className="size-11" fill="none" stroke="#dcdcdc" strokeWidth="3" strokeLinecap="round" strokeLinejoin="round">
          <path d="M34 2L12 22L34 42" />
        </svg>
      </button>
    </nav>
  );
}

export default function App() {
  return (
    <div className="flex h-screen flex-col overflow-hidden bg-[#0b1014] font-[Roboto,'Noto_Sans',sans-serif]">
      <Header />
      <main className="relative flex min-h-0 flex-1 flex-col overflow-hidden bg-[#0b1014]">
        <Wallpaper />
        <Conversation />
        <Composer />
        <button aria-label="Ir al final" className="absolute right-8 bottom-[190px] flex size-[84px] items-center justify-center rounded-full bg-[#26323a] shadow-md shadow-black/50">
          <svg viewBox="0 0 32 36" className="h-9 w-8" fill="none" stroke="#949b9f" strokeWidth="5" strokeLinecap="round" strokeLinejoin="round">
            <path d="M4 4L16 16L28 4M4 20L16 32L28 20" />
          </svg>
        </button>
      </main>
      <NavigationBar />
    </div>
  );
}
